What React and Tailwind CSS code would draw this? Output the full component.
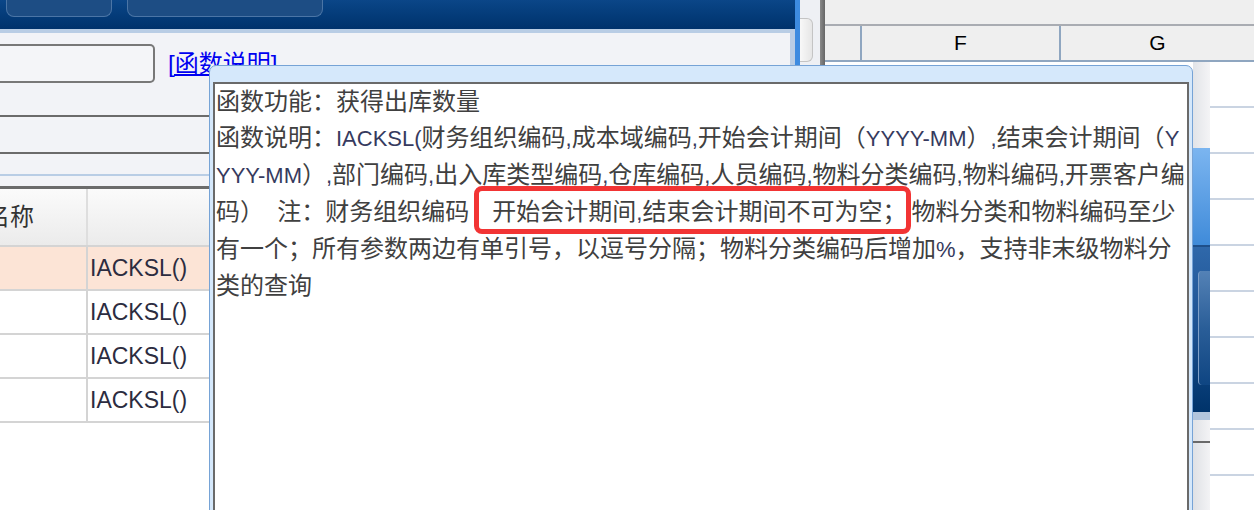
// Function-help popup over the formula editor and spreadsheet
const Lt = ({ children }) => <span className="text-[22px] text-[#363a5e]">{children}</span>;

const Row = ({ peach }) => (
  <div className={`flex h-[44px] border-b-2 border-[#d4d4d4] ${peach ? "bg-[#fce4d6]" : "bg-white"}`}>
    <div className="w-[88px] shrink-0 border-r-2 border-[#d4d4d4]" />
    <div className="flex items-center pl-[2px] text-[23px] text-[#2c2c40]">IACKSL()</div>
  </div>
);

const NavButton = ({ w, label }) => (
  <div
    className={`flex h-[17px] ${w} items-end justify-center overflow-hidden rounded-b-[8px] border border-t-0 border-[#4b75a6] bg-[#1d4d84] pb-[15px]`}
  >
    <span className="text-[22px] leading-[24px] text-white">{label}</span>
  </div>
);

export default function App() {
  return (
    <div className="relative flex h-[510px] w-[1254px] overflow-hidden bg-white font-['Liberation_Sans','Noto_Sans_CJK_SC',sans-serif]">
      {/* left panel: formula editor */}
      <div className="flex w-[795px] shrink-0 flex-col bg-[#f2f3f7]">
        <div className="flex h-[29px] shrink-0 gap-[15px] bg-gradient-to-b from-[#0b4688] to-[#00326c] pl-[6px]">
          <NavButton w="w-[106px]" label="确 定" />
          <NavButton w="w-[196px]" label="设置函数参数" />
        </div>
        <div className="flex flex-1 flex-col border-t-4 border-r-[5px] border-[#b9cde5]">
          <div className="flex h-[82px] shrink-0 items-start pt-[11px]">
            <div className="h-[39px] w-[155px] rounded-r-[5px] border-2 border-l-0 border-[#787878] bg-[#f4f5f8]" />
            <div className="ml-[13px] flex h-[39px] items-center">
              <span className="text-[24px] leading-[26px] text-[#0000f0] underline">[函数说明]</span>
            </div>
          </div>
          <div className="h-[2px] shrink-0 bg-[#6b6b6b]" />
          <div className="h-[35px] shrink-0" />
          <div className="h-[2px] shrink-0 bg-[#6b6b6b]" />
          <div className="h-[20px] shrink-0" />
          <div className="h-[2px] shrink-0 bg-[#b9cde5]" />
          <div className="h-[10px] shrink-0" />
          <div className="h-[3px] shrink-0 bg-[#6b6b6b]" />
          <div className="flex flex-1 flex-col bg-white">
            <div className="flex h-[58px] shrink-0 border-b-2 border-[#d4d4d4] bg-gradient-to-b from-[#fbfbfb] to-[#ebebeb]">
              <div className="flex w-[88px] shrink-0 items-center overflow-hidden border-r-2 border-[#dedede]">
                <span className="-ml-[14px] whitespace-nowrap text-[24px] text-[#333]">名称</span>
              </div>
            </div>
            <Row peach />
            <Row />
            <Row />
            <Row />
          </div>
        </div>
      </div>

      {/* splitter */}
      <div className="w-[5px] shrink-0 bg-[#3d8be0]" />
      <div className="w-[20px] shrink-0 bg-[#eef0f4]">
        <div className="mt-[18px] h-[44px] w-[13px] rounded-r-[6px] border border-l-0 border-[#c4c4c4] bg-gradient-to-r from-[#f8f8f8] to-[#e6e6e6]" />
      </div>
      <div className="w-[5px] shrink-0 bg-gradient-to-r from-[#8a8a8a] to-[#666]" />

      {/* right panel: spreadsheet */}
      <div className="flex flex-1 flex-col">
        <div className="h-[24px] shrink-0 bg-[#efefef]" />
        <div className="h-[2px] shrink-0 bg-[#a9acb2]" />
        <div className="flex h-[36px] shrink-0 border-b-2 border-[#8fa6c0] bg-[#efefef] text-[21px] text-black">
          <div className="w-[37px] shrink-0 border-r-2 border-[#8fa6c0]" />
          <div className="flex w-[199px] shrink-0 items-center justify-center border-r-2 border-[#8fa6c0]">F</div>
          <div className="flex flex-1 items-center justify-center">G</div>
        </div>
        <div className="flex flex-1">
          <div className="w-[368px] shrink-0" />
          <div className="flex w-[17px] shrink-0 flex-col">
            <div className="h-[86px] bg-gradient-to-r from-[#e2e4e8] to-[#f4f4f6]" />
            <div className="h-[99px] border-b-2 border-[#1e4f8a] bg-gradient-to-b from-[#7bb5f0] to-[#3f8bd9]" />
            <div className="h-[165px] bg-gradient-to-b from-[#2f68aa] via-[#1b5192] to-[#00336a] pt-[24px] pl-[5px]">
              <div className="h-[114px] rounded-l-[4px] border-l border-[#7fa0c8] bg-gradient-to-b from-[#5482b6] via-[#2a5e98] to-[#0e4582]" />
            </div>
            <div className="h-[8px] bg-[#b2c5dc]" />
            <div className="h-[21px] bg-gradient-to-r from-[#e0e2e6] to-[#f3f3f5]" />
            <div className="h-[2px] bg-[#6a6a6a]" />
            <div className="flex-1 bg-gradient-to-r from-[#dfe1e5] to-[#f3f3f5]" />
          </div>
          <div className="flex flex-1 flex-col">
            {Array.from({ length: 10 }).map((_, i) => (
              <div key={i} className="h-[46px] shrink-0 border-b-2 border-[#cad4e2]" />
            ))}
          </div>
        </div>
      </div>

      {/* function description popup */}
      <div className="absolute left-[209px] top-[65px] h-[470px] w-[984px] rounded-t-[7px] border border-[#76a3d6] bg-[#d5e8fb] px-[3px] pt-[16px]">
        <div className="h-full overflow-hidden border-2 border-[#6a6a6a] bg-white pl-[1px] text-[24px] leading-[36px] text-[#404040]">
          <div className="whitespace-nowrap">函数功能：获得出库数量</div>
          <div className="whitespace-nowrap">
            函数说明：<Lt>IACKSL(</Lt>财务组织编码<Lt>,</Lt>成本域编码<Lt>,</Lt>开始会计期间（<Lt>YYYY-MM</Lt>）<Lt>,</Lt>结束会计期间（<Lt>Y</Lt>
          </div>
          <div className="whitespace-nowrap">
            <Lt>YYY-MM</Lt>）<Lt>,</Lt>部门编码<Lt>,</Lt>出入库类型编码<Lt>,</Lt>仓库编码<Lt>,</Lt>人员编码<Lt>,</Lt>物料分类编码<Lt>,</Lt>物料编码<Lt>,</Lt>开票客户编
          </div>
          <div className="whitespace-nowrap">
            码）{"\u00a0\u00a0"}注：财务组织编码
            <span className="ml-[5px] rounded-[8px] border-[5px] border-[#f23434] pt-[7px] pb-[4px] pl-[13px] pr-0">
              开始会计期间<Lt>,</Lt>结束会计期间不可为空；
            </span>
            物料分类和物料编码至少
          </div>
          <div className="whitespace-nowrap">
            有一个；所有参数两边有单引号，以逗号分隔；物料分类编码后增加<Lt>%</Lt>，支持非末级物料分
          </div>
          <div className="whitespace-nowrap">类的查询</div>
        </div>
      </div>
    </div>
  );
}
